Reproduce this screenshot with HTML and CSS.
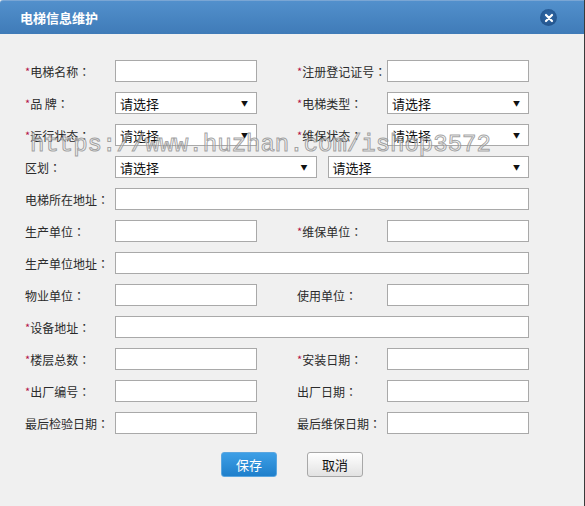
FILE: index.html
```html
<!DOCTYPE html>
<html lang="zh-CN">
<head>
<meta charset="utf-8">
<title>电梯信息维护</title>
<link rel="stylesheet" href="styles.css">
</head>
<body>
<div class="dialog">
  <div class="titlebar">
    <span class="title">电梯信息维护</span>
    <span class="close">
      <svg width="10" height="10" viewBox="0 0 10 10"><path d="M2 2 L8 8 M8 2 L2 8" stroke="#fff" stroke-width="2.2" stroke-linecap="round"/></svg>
    </span>
  </div>
  <div class="content">
    <form class="form">
      <label class="lbl"><em>*</em>电梯名称<b>：</b></label>
      <span class="inp"></span>
      <span class="sp"></span>
      <label class="lbl"><em>*</em>注册登记证号<b>：</b></label>
      <span class="inp"></span>

      <label class="lbl"><em>*</em>品 牌<b>：</b></label>
      <span class="inp sel">请选择<i class="arr">▼</i></span>
      <span class="sp"></span>
      <label class="lbl"><em>*</em>电梯类型<b>：</b></label>
      <span class="inp sel">请选择<i class="arr">▼</i></span>

      <label class="lbl"><em>*</em>运行状态<b>：</b></label>
      <span class="inp sel">请选择<i class="arr">▼</i></span>
      <span class="sp"></span>
      <label class="lbl"><em>*</em>维保状态<b>：</b></label>
      <span class="inp sel">请选择<i class="arr">▼</i></span>

      <label class="lbl">区划<b>：</b></label>
      <div class="wide pair">
        <span class="inp sel">请选择<i class="arr">▼</i></span>
        <span class="inp sel">请选择<i class="arr">▼</i></span>
      </div>

      <label class="lbl">电梯所在地址<b>：</b></label>
      <span class="inp wide"></span>

      <label class="lbl">生产单位<b>：</b></label>
      <span class="inp"></span>
      <span class="sp"></span>
      <label class="lbl"><em>*</em>维保单位<b>：</b></label>
      <span class="inp"></span>

      <label class="lbl">生产单位地址<b>：</b></label>
      <span class="inp wide"></span>

      <label class="lbl">物业单位<b>：</b></label>
      <span class="inp"></span>
      <span class="sp"></span>
      <label class="lbl">使用单位<b>：</b></label>
      <span class="inp"></span>

      <label class="lbl"><em>*</em>设备地址<b>：</b></label>
      <span class="inp wide"></span>

      <label class="lbl"><em>*</em>楼层总数<b>：</b></label>
      <span class="inp"></span>
      <span class="sp"></span>
      <label class="lbl"><em>*</em>安装日期<b>：</b></label>
      <span class="inp"></span>

      <label class="lbl"><em>*</em>出厂编号<b>：</b></label>
      <span class="inp"></span>
      <span class="sp"></span>
      <label class="lbl">出厂日期<b>：</b></label>
      <span class="inp"></span>

      <label class="lbl">最后检验日期<b>：</b></label>
      <span class="inp"></span>
      <span class="sp"></span>
      <label class="lbl">最后维保日期<b>：</b></label>
      <span class="inp"></span>
    </form>
    <div class="buttons">
      <button type="button" class="btn primary">保存</button>
      <button type="button" class="btn">取消</button>
    </div>
    <span class="watermark">https://www.huzhan.com/ishop3572</span>
  </div>
</div>
</body>
</html>
```

FILE: styles.css
```css
* { box-sizing: border-box; }
html, body { margin: 0; padding: 0; }
body {
  width: 585px;
  height: 506px;
  overflow: hidden;
  background: #f0f0f0;
  font-family: "Noto Sans CJK SC", "Liberation Sans", sans-serif;
  font-size: 12px;
  color: #333;
}
.dialog {
  width: 585px;
  height: 506px;
  display: flex;
  flex-direction: column;
  border-right: 1px solid #3a3a3a;
  background: #f0f0f0;
}
.titlebar {
  height: 34px;
  flex: none;
  display: flex;
  align-items: center;
  justify-content: space-between;
  padding: 0 27px 0 20px;
  background: linear-gradient(#5290cc, #3f7bb8);
  border-top: 1px solid #7aa6d4;
  border-top-left-radius: 3px;
}
.title {
  color: #fff;
  font-weight: bold;
  font-size: 13px;
}
.close {
  width: 17px;
  height: 17px;
  border-radius: 50%;
  background: radial-gradient(circle at 50% 40%, #2f67a6, #1f4f86);
  display: flex;
  align-items: center;
  justify-content: center;
}
.close svg { display: block; }
.content {
  position: relative;
  flex: 1;
  padding: 26px 0 0 25px;
}
.form {
  display: grid;
  grid-template-columns: 90px 142px 40px 90px 142px;
  grid-auto-rows: 22px;
  row-gap: 10px;
  margin: 0;
}
.lbl {
  display: flex;
  align-items: center;
  white-space: nowrap;
  color: #2b2b2b;
  font-size: 12px;
}
.lbl em {
  font-style: normal;
  color: #b4124a;
  font-size: 11px;
}
.lbl b {
  font-weight: normal;
  font-family: "Noto Sans CJK TC", "Noto Sans CJK SC", sans-serif;
}
.inp {
  display: flex;
  align-items: center;
  background: #fff;
  border: 1px solid #a9a9a9;
  height: 22px;
}
.wide { grid-column: span 4; }
.pair {
  display: flex;
  gap: 11px;
}
.pair .inp { flex: 1; }
.sel {
  justify-content: space-between;
  padding: 0 8px 0 4px;
  font-size: 13px;
  color: #111;
}
.arr {
  font-style: normal;
  font-size: 7px;
  color: #111;
}
.buttons {
  display: flex;
  justify-content: center;
  gap: 30px;
  margin-top: 18px;
  padding-right: 25px;
}
.btn {
  width: 56px;
  height: 25px;
  border-radius: 3px;
  font-family: "Noto Sans CJK SC", sans-serif;
  font-size: 13px;
  padding: 0;
  border: 1px solid #a8a8a8;
  background: linear-gradient(#ffffff, #e2e2e2);
  color: #111;
}
.btn.primary {
  color: #fff;
  border: 1px solid #5aa6e0;
  background: linear-gradient(#3d9fe6, #1f7fcb);
}
.watermark {
  position: absolute;
  left: 30px;
  top: 97px;
  font-family: "Liberation Mono", monospace;
  font-size: 24px;
  color: rgba(255, 255, 255, 0.35);
  -webkit-text-stroke: 1px rgba(140, 140, 140, 0.8);
  pointer-events: none;
  white-space: nowrap;
}
```
